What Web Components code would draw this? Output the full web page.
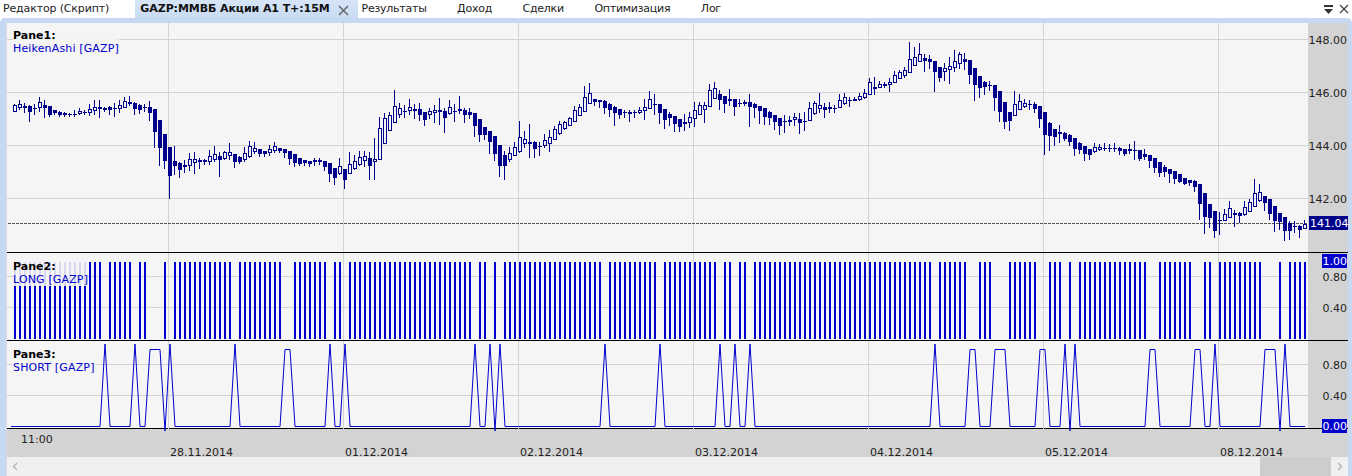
<!DOCTYPE html>
<html>
<head>
<meta charset="utf-8">
<title>GAZP</title>
<style>
  html, body { margin: 0; padding: 0; background: #fff; }
  body { font: 11px "DejaVu Sans", Verdana, sans-serif; overflow: hidden; }
</style>
</head>
<body>
<tab-bar>
  <tab-item style="margin-right: 11px; padding-left: 3px; letter-spacing: -.15px">Редактор (Скрипт)</tab-item>
  <tab-item active closable>GAZP:ММВБ Акции A1 T+:15M</tab-item>
  <tab-item>Результаты</tab-item>
  <tab-item>Доход</tab-item>
  <tab-item>Сделки</tab-item>
  <tab-item>Оптимизация</tab-item>
  <tab-item>Лог</tab-item>
</tab-bar>
<chart-frame>
  <chart-pane kind="candles" top="23" height="229" title-text="Pane1:" series="HeikenAshi [GAZP]" label-top="6"></chart-pane>
  <chart-pane kind="bars" top="253" height="87" title-text="Pane2:" series="LONG [GAZP]" label-top="7" ruled></chart-pane>
  <chart-pane kind="line" top="341" height="87" title-text="Pane3:" series="SHORT [GAZP]" label-top="7" ruled></chart-pane>
  <time-axis></time-axis>
  <h-scrollbar></h-scrollbar>
</chart-frame>

<script>
// one row per bar, x = 15 + 5 * row. top bottom high low in page pixels, o = hollow
const CANDLES = `105 112 104 112 o;104 108 100 110 o;106 108 103 113;106 112 105 122;108 109 104 115;102 108 97 112 o;105 108 100 118;106 115 106 117;110 113 110 115;112 115 111 117;113 115 112 117;114 115 113 117;114 115 110 117;111 114 108 115 o;112 113 110 115;109 113 104 116 o;107 111 100 115 o;107 109 100 118 o;108 110 107 112;107 110 106 115;108 109 103 117;105 109 100 113 o;101 108 97 108 o;102 104 96 106 o;103 109 102 115;105 110 104 114;107 108 104 112;107 113 101 121;109 132 109 148;120 148 120 166;134 161 134 169;147 176 147 199;161 166 146 175;163 170 162 178;165 167 160 173;159 166 153 171 o;159 163 152 174 o;160 162 158 169;160 162 159 165;156 162 150 165 o;154 160 146 162 o;156 160 152 177;152 159 151 160 o;152 156 143 160 o;154 162 154 168;157 162 156 164;153 160 147 162 o;146 157 141 158 o;148 152 142 154 o;149 154 149 157;151 154 151 157;149 153 145 156 o;146 151 142 153 o;148 151 148 153;149 153 149 158;151 159 151 165;154 163 154 167;158 164 158 166;160 163 160 166;161 164 161 167;160 162 158 166 o;160 162 158 165;161 167 161 171;163 174 163 182;168 178 168 185;166 174 158 175 o;169 180 169 189;164 174 152 174 o;161 169 155 170 o;157 165 151 166 o;156 161 151 167 o;158 166 152 180;159 162 138 180 o;128 160 117 160 o;118 144 113 144 o;115 131 112 131 o;106 123 90 123 o;108 115 103 118 o;111 112 105 118;107 111 99 115 o;109 111 104 119;109 115 103 121;112 120 112 126;111 115 108 119 o;110 113 105 123 o;110 112 98 125 o;111 118 108 133;107 114 100 115 o;111 112 104 122;109 111 96 114 o;110 115 108 123;112 115 108 119;113 126 113 137;119 135 119 142;127 135 127 140;131 142 131 154;136 154 136 161;145 166 145 177;155 166 151 180;153 160 147 162 o;147 156 142 156 o;137 152 121 153 o;139 144 131 148 o;142 144 124 158;142 149 141 158;146 147 142 156;140 146 134 148 o;137 144 130 152 o;129 140 126 140 o;124 134 121 135 o;122 129 121 130 o;118 126 117 126 o;110 122 106 122 o;107 116 104 116 o;97 112 86 112 o;93 104 83 104 o;99 102 99 106;100 102 100 108;101 108 100 114;104 110 103 117;107 113 106 126;109 115 109 119;112 113 110 118;112 114 110 122;112 113 110 118;110 113 107 114 o;107 111 99 120 o;99 109 91 109 o;104 105 94 115;104 113 104 124;109 120 109 129;114 118 112 126;116 124 116 132;119 127 119 132;122 124 114 131;117 123 112 128 o;110 119 102 127 o;105 115 102 115 o;105 110 102 123 o;90 107 84 107 o;88 99 82 99 o;94 100 90 110;96 104 96 113;99 101 89 106;99 107 99 116;103 104 99 107;102 104 100 106;102 107 94 127;104 108 103 118;106 111 106 124;108 117 108 125;112 118 111 125;115 122 115 130;118 126 118 135;121 122 115 133;120 122 116 126;117 120 113 126 o;119 123 113 134;121 122 112 131;108 121 102 121 o;103 114 101 115 o;105 109 93 113 o;107 110 103 118;107 109 102 113;108 109 105 113;100 108 94 108 o;97 104 93 105 o;100 101 97 107;99 101 97 101;96 100 93 101 o;93 98 89 99 o;82 95 78 95 o;87 89 77 95 o;84 88 81 88 o;84 86 82 88;82 85 78 92 o;75 83 71 83 o;72 79 70 79 o;70 76 67 78 o;59 73 42 73 o;57 66 47 66 o;54 62 43 62 o;58 61 54 72;59 62 55 69;61 72 61 92;67 78 67 82;68 72 63 81 o;66 70 57 84 o;61 68 50 72 o;54 64 52 69 o;59 62 53 70;60 75 60 84;68 85 68 101;76 88 76 98;82 87 81 95;85 86 81 91;85 98 85 111;91 112 91 122;102 122 102 129;112 121 112 131;104 116 91 116 o;101 110 94 110 o;103 107 99 108 o;104 105 100 110;104 109 102 113;106 119 106 128;112 135 112 155;123 136 122 151;129 137 129 146;132 134 125 143;133 139 132 141;135 142 134 146;138 149 138 156;143 150 142 154;146 154 146 161;149 155 149 160;147 152 143 153 o;147 150 144 151 o;148 149 143 151;148 149 144 152;148 149 143 152;148 151 147 155;149 154 149 156;149 151 144 154 o;150 151 141 160;150 159 150 161;154 157 149 160;155 161 155 168;158 168 158 173;162 173 162 177;167 172 165 177;169 174 169 183;171 179 171 184;174 182 174 183;178 184 178 185;180 183 180 186;181 187 180 192;184 204 184 220;193 217 193 234;204 218 204 228;211 231 211 238;220 221 212 235;214 221 209 221 o;208 218 201 218 o;213 215 210 227;213 216 212 223;207 215 201 216 o;202 212 199 212 o;193 207 179 207 o;192 201 184 202 o;196 203 196 211;199 214 199 220;206 221 206 232;213 222 213 230;217 231 217 241;223 231 221 240;226 227 221 233;226 230 225 238;224 229 220 229 o`;

// bars where LONG is 0, SHORT is the mirror of it
const LONG_GAPS = new Set([105,135,150,155,160,170,235,285,290,330,345,475,490,500,605,660,720,735,750,935,970,975,995,1000,1005,1040,1045,1065,1075,1150,1155,1195,1200,1215,1265,1270,1275,1285]);

const GRID_X = [168, 343, 518, 693, 868, 1043, 1218];
const PLOT_W = 1301;

const AXES = {
  candles: {
    grid: [39, 92, 145, 198],
    ticks: [[41, '148.00'], [94, '146.00'], [147, '144.00'], [200, '142.00']],
    mark: { y: 216, text: '141.04' },
  },
  bars: { grid: [276, 307], ticks: [[278, '0.80'], [309, '0.40']], mark: { y: 254, text: '1.00' } },
  line: { grid: [364, 395], ticks: [[366, '0.80'], [397, '0.40']], mark: { y: 419, text: '0.00' } },
};

function candlesSvg() {
  const navy = '#00008b';
  let out = '<rect x="7" y="223" width="1301" height="1" fill="url(#dash)"/>';
  CANDLES.split(';').forEach((row, i) => {
    const [t, b, h, l, o] = row.trim().split(' ');
    const [top, bot, hi, lo] = [+t, +b, +h, +l];
    const x = 15 + i * 5;
    if (o) {
      if (hi < top) out += `<rect x="${x - 1}" y="${hi}" width="1" height="${top - hi}" fill="${navy}"/>`;
      if (lo > bot) out += `<rect x="${x - 1}" y="${bot}" width="1" height="${lo - bot}" fill="${navy}"/>`;
      out += `<rect x="${x - 1.5}" y="${top + 0.5}" width="3" height="${Math.max(bot - top - 1, 1)}" fill="none" stroke="${navy}"/>`;
    } else {
      out += `<rect x="${x - 1}" y="${hi}" width="1" height="${lo - hi}" fill="${navy}"/>`;
      out += `<rect x="${x - 2}" y="${top}" width="4" height="${bot - top}" fill="${navy}"/>`;
    }
  });
  return out;
}

function barsSvg() {
  let out = '';
  for (let x = 15; x <= 1305; x += 5) {
    if (!LONG_GAPS.has(x)) out += `<rect x="${x - 1}" y="262" width="2" height="77" fill="#0000cd"/>`;
  }
  return out;
}

function lineSvg() {
  const pts = ['11,426.5'];
  for (let x = 15; x <= 1305; x += 5) {
    const s = LONG_GAPS.has(x);
    const alone = LONG_GAPS.has(x - 5) !== s && LONG_GAPS.has(x + 5) !== s;
    const y = s ? (alone ? 344 : 349.5) : (alone && x > 15 && x < 1305 ? 431 : 426.5);
    pts.push(`${x},${y}`);
  }
  return `<polyline points="${pts.join(' ')}" fill="none" stroke="#0000cd" stroke-width="1"/>`;
}

const PLOTS = { candles: candlesSvg, bars: barsSvg, line: lineSvg };

class TabBar extends HTMLElement {
  constructor() {
    super();
    this.attachShadow({ mode: 'open' }).innerHTML = `
      <style>
        :host { display: flex; align-items: stretch; height: 18px; background: #fff; position: relative; }
        .tools { margin-left: auto; display: flex; align-items: center; gap: 5px; padding-right: 3px; }
        svg { display: block; }
      </style>
      <slot></slot>
      <div class="tools">
        <svg width="11" height="12" viewBox="0 0 11 12">
          <rect x="1" y="2" width="9" height="2" fill="#333"/>
          <path d="M1 6h9l-4.5 5z" fill="#333"/>
        </svg>
        <svg width="10" height="12" viewBox="0 0 10 12">
          <path d="M1 2l8 8M9 2l-8 8" stroke="#444" stroke-width="1.2" fill="none"/>
        </svg>
      </div>`;
  }
}

class TabItem extends HTMLElement {
  constructor() {
    super();
    const closable = this.hasAttribute('closable');
    this.attachShadow({ mode: 'open' }).innerHTML = `
      <style>
        :host { display: flex; align-items: center; gap: 8px; padding: 0 15.25px 1px; color: #222; white-space: nowrap; line-height: 15px; box-sizing: border-box; letter-spacing: -.25px; }
        :host([active]) { font-weight: bold; letter-spacing: -.08px; background: linear-gradient(#d6e4f7, #c9dcf3); padding: 0 9px 1px 5px; margin-right: -11.25px; color: #111; }
        svg { display: block; margin-top: 4px; }
      </style>
      <slot></slot>
      ${closable ? `<svg width="11" height="11" viewBox="0 0 11 11"><path d="M1 1l9 9M10 1l-9 9" stroke="#666" stroke-width="1.5" fill="none"/></svg>` : ''}`;
  }
}

class ChartFrame extends HTMLElement {
  constructor() {
    super();
    this.attachShadow({ mode: 'open' }).innerHTML = `
      <style>
        :host { display: flex; flex-direction: column; height: 458px; box-sizing: border-box; background: #f5f5f5;
          border: solid #c7d9f2; border-width: 5px 4px 0 6px; border-top-left-radius: 5px; border-top-right-radius: 5px; }
        .inner { display: flex; flex-direction: column; flex: 1; border-left: 1px solid #dcdcdc; }
      </style>
      <div class="inner"><slot></slot></div>`;
  }
}

class ChartPane extends HTMLElement {
  constructor() {
    super();
    const kind = this.getAttribute('kind');
    const top = +this.getAttribute('top');
    const height = +this.getAttribute('height');
    const ruled = this.hasAttribute('ruled');
    const { grid, ticks, mark } = AXES[kind];
    const grids = grid.map((y) => `<rect x="7" y="${y}" width="${PLOT_W}" height="1" fill="#d3d3d3"/>`).join('');
    const columns = GRID_X.map((x) => `<rect x="${x}" y="${top}" width="1" height="${height + (kind === 'line' ? 2 : 0)}" fill="#d3d3d3"/>`).join('');
    const labels = ticks.map(([y, text]) => `<span class="tick" style="top:${y - top - 8}px">${text}</span>`).join('');
    const cur = kind === 'candles' ? ' cur' : '';
    this.attachShadow({ mode: 'open' }).innerHTML = `
      <style>
        :host { display: flex; position: relative; z-index: 1; height: ${height + (ruled ? 1 : 0)}px; box-sizing: border-box; ${ruled ? 'border-top: 1px solid #000;' : ''} }
        :host([kind="line"]) { height: 89px; border-bottom: 1px solid #000; }
        .plot { position: relative; width: ${PLOT_W}px; }
        svg { display: block; overflow: visible; position: absolute; left: 0; top: 0; }
        .label { position: absolute; left: 6px; top: ${this.getAttribute('label-top')}px; background: rgba(245,245,245,.88); line-height: 13px; white-space: nowrap; }
        .name { font-weight: bold; color: #000; }
        .series { color: #0000cd; letter-spacing: .15px; }
        .axis { position: relative; flex: 1; background: #d3d3d3; color: #222; }
        .tick { position: absolute; right: 1px; line-height: 15px; }
        .mark { position: absolute; right: 1px; height: 14px; line-height: 15px; padding: 0 0 0 1px; background: #0000cd; color: #fff; overflow: hidden; }
        .cur { background: #00008b; left: 1px; right: 0; }
      </style>
      <div class="plot">
        <svg width="${PLOT_W}" height="${height}" viewBox="7 ${top} ${PLOT_W} ${height}">
          <defs><pattern id="dash" width="4" height="1" patternUnits="userSpaceOnUse"><rect width="3" height="1" fill="#555"/></pattern></defs>
          ${grids}${columns}${PLOTS[kind]()}
        </svg>
        <div class="label"><div class="name">${this.getAttribute('title-text')}</div><div class="series">${this.getAttribute('series')}</div></div>
      </div>
      <div class="axis">${labels}<span class="mark${cur}" style="top:${mark.y - top}px">${mark.text}</span></div>`;
  }
}

class TimeAxis extends HTMLElement {
  constructor() {
    super();
    const dates = ['28.11.2014', '01.12.2014', '02.12.2014', '03.12.2014', '04.12.2014', '05.12.2014', '08.12.2014'];
    this.attachShadow({ mode: 'open' }).innerHTML = `
      <style>
        :host { display: grid; height: 28px; background: #d3d3d3; color: #222; grid-template-rows: 14px 14px; grid-template-columns: 163px repeat(7, 175px); line-height: 14px; flex: none; white-space: nowrap; }
        .time { grid-column: 1 / 3; padding-left: 14px; padding-top: 4px; }
        .date { grid-row: 2; padding-top: 3px; }
      </style>
      <div class="time">11:00</div>
      ${dates.map((d, i) => `<div class="date" style="grid-column:${i + 2}">${d}</div>`).join('')}`;
  }
}

class HScrollbar extends HTMLElement {
  constructor() {
    super();
    this.attachShadow({ mode: 'open' }).innerHTML = `
      <style>
        :host { display: flex; align-items: center; height: 19px; background: #f0f0f0; flex: none; }
        .arrow { width: 17px; display: flex; justify-content: center; flex: none; }
        .arrow.back { width: 15px; margin-right: 2px; }
        .track { flex: 1; display: flex; justify-content: flex-end; height: 100%; }
        .thumb { width: 71px; height: 100%; background: #cdcdcd; }
      </style>
      <div class="arrow back"><svg width="6" height="9" viewBox="0 0 6 9"><path d="M5 1L1.5 4.5 5 8" fill="none" stroke="#b0b0b0" stroke-width="1.3"/></svg></div>
      <div class="track"><div class="thumb"></div></div>
      <div class="arrow"><svg width="6" height="9" viewBox="0 0 6 9"><path d="M1 1l3.5 3.5L1 8" fill="none" stroke="#b0b0b0" stroke-width="1.3"/></svg></div>`;
  }
}

customElements.define('tab-bar', TabBar);
customElements.define('tab-item', TabItem);
customElements.define('chart-frame', ChartFrame);
customElements.define('chart-pane', ChartPane);
customElements.define('time-axis', TimeAxis);
customElements.define('h-scrollbar', HScrollbar);
</script>
</body>
</html>
